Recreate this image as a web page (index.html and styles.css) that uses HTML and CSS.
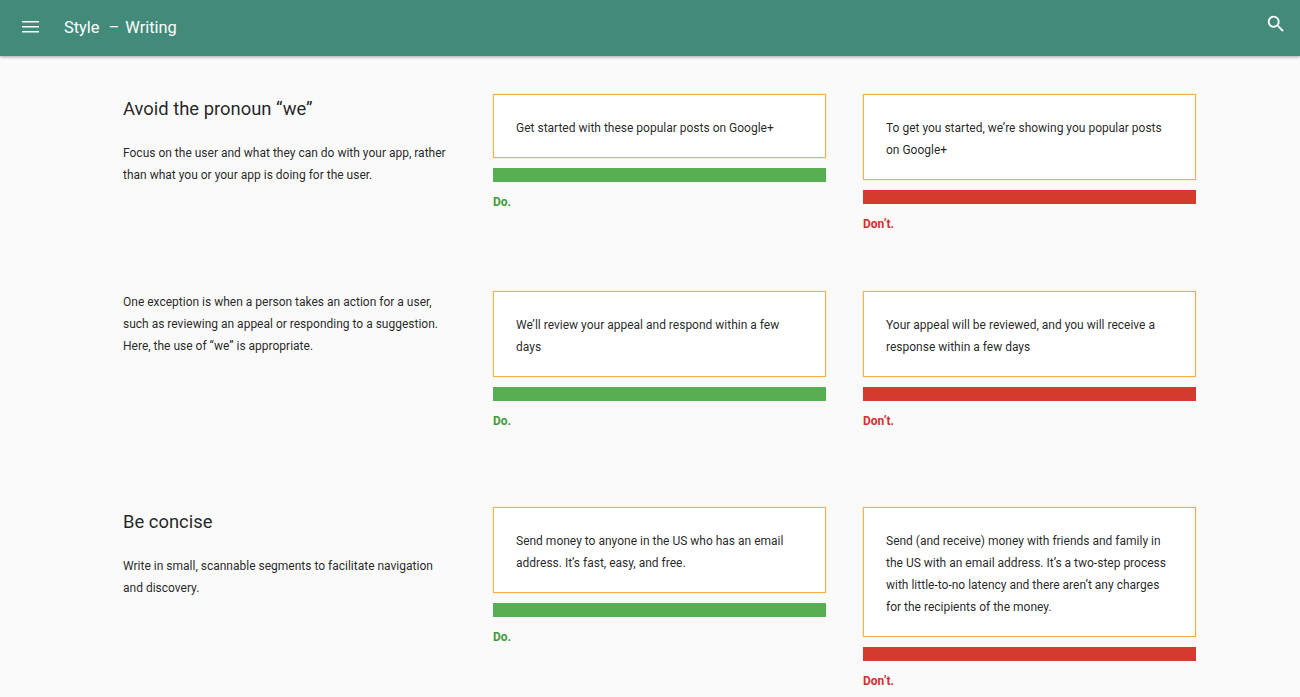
FILE: index.html
```html
<!DOCTYPE html>
<html lang="en">
<head>
<meta charset="utf-8">
<title>Style – Writing</title>
<link rel="stylesheet" href="styles.css">
</head>
<body>
<header class="appbar">
  <svg class="menu-icon" width="17" height="12" viewBox="0 0 17 12"><path d="M0 0h17v1.6H0zM0 5h17v1.6H0zM0 10h17v1.6H0z" fill="#fff"/></svg>
  <div class="title"><span>Style</span><span class="dash">–</span><span>Writing</span></div>
  <svg class="search-icon" width="22" height="22" viewBox="0 0 24 24"><path d="M15.5 14h-.79l-.28-.27A6.47 6.47 0 0 0 16 9.5 6.5 6.5 0 1 0 9.5 16c1.61 0 3.09-.59 4.23-1.57l.27.28v.79l5 4.99L20.49 19l-4.99-5zm-6 0C7.01 14 5 11.99 5 9.5S7.01 5 9.5 5 14 7.01 14 9.5 11.99 14 9.5 14z" fill="#fff"/></svg>
</header>
<main class="content">
  <section class="row row-one">
    <div class="intro">
      <h2>Avoid the pronoun “we”</h2>
      <p>Focus on the user and what they can do with your app, rather than what you or your app is doing for the user.</p>
    </div>
    <div class="example do">
      <div class="box">Get started with these popular posts on Google+</div>
      <div class="bar"></div>
      <div class="label">Do.</div>
    </div>
    <div class="example dont">
      <div class="box">To get you started, we’re showing you popular posts on Google+</div>
      <div class="bar"></div>
      <div class="label">Don’t.</div>
    </div>
  </section>
  <section class="row row-two">
    <div class="intro">
      <p>One exception is when a person takes an action for a user, such as reviewing an appeal or responding to a suggestion. Here, the use of “we” is appropriate.</p>
    </div>
    <div class="example do">
      <div class="box">We’ll review your appeal and respond within a few days</div>
      <div class="bar"></div>
      <div class="label">Do.</div>
    </div>
    <div class="example dont">
      <div class="box">Your appeal will be reviewed, and you will receive a response within a few days</div>
      <div class="bar"></div>
      <div class="label">Don’t.</div>
    </div>
  </section>
  <section class="row row-three">
    <div class="intro">
      <h2>Be concise</h2>
      <p>Write in small, scannable segments to facilitate navigation and discovery.</p>
    </div>
    <div class="example do">
      <div class="box">Send money to anyone in the US who has an email address. It’s fast, easy, and free.</div>
      <div class="bar"></div>
      <div class="label">Do.</div>
    </div>
    <div class="example dont">
      <div class="box">Send (and receive) money with friends and family in the US with an email address. It’s a two-step process with little-to-no latency and there aren’t any charges for the recipients of the money.</div>
      <div class="bar"></div>
      <div class="label">Don’t.</div>
    </div>
  </section>
</main>
</body>
</html>
```
FILE: styles.css
```css
* { box-sizing: border-box; }
html, body { margin: 0; height: 100%; overflow: hidden; }
body {
  background: #fafafa;
  font-family: Roboto, "Liberation Sans", sans-serif;
  color: rgba(0, 0, 0, 0.87);
  display: flex;
  flex-direction: column;
  height: 697px;
}
.appbar {
  height: 56px;
  flex: none;
  background: #428a79;
  box-shadow: 0 1px 3px rgba(0, 0, 0, 0.35);
  display: flex;
  align-items: center;
  padding: 0 13px 2px 22px;
  color: #fff;
}
.menu-icon { flex: none; }
.title {
  margin-left: 25px;
  font-size: 16.4px;
  display: flex;
  flex: 1;
}
.dash { margin: 0 6px 0 9px; }
.search-icon { align-self: flex-start; margin-top: 13px; }
.content { padding: 38px 104px 0 123px; }
.row {
  display: grid;
  grid-template-columns: 333px 333px 333px;
  column-gap: 37px;
}
.row-one { height: 197px; }
.row-two { height: 216px; }
h2 {
  margin: 3px 0 21px;
  font-size: 18.4px;
  font-weight: 400;
  line-height: 24px;
}
.intro p {
  margin: 0;
  max-width: 328px;
  font-size: 12px;
  line-height: 22px;
}
.box {
  background: #fff;
  border: 1px solid #f6b04a;
  box-shadow: 0 0 1px rgba(246, 176, 74, 0.8);
  padding: 22px 22px 18px;
  font-size: 12px;
  line-height: 22px;
}
.bar { height: 14px; margin-top: 10px; }
.do .bar { background: #58ae52; }
.dont .bar { background: #d43a2d; }
.label {
  margin-top: 12px;
  font-size: 12px;
  font-weight: 700;
  line-height: 16px;
}
.do .label { color: #3f9c3a; }
.dont .label { color: #d32f2f; }
```
